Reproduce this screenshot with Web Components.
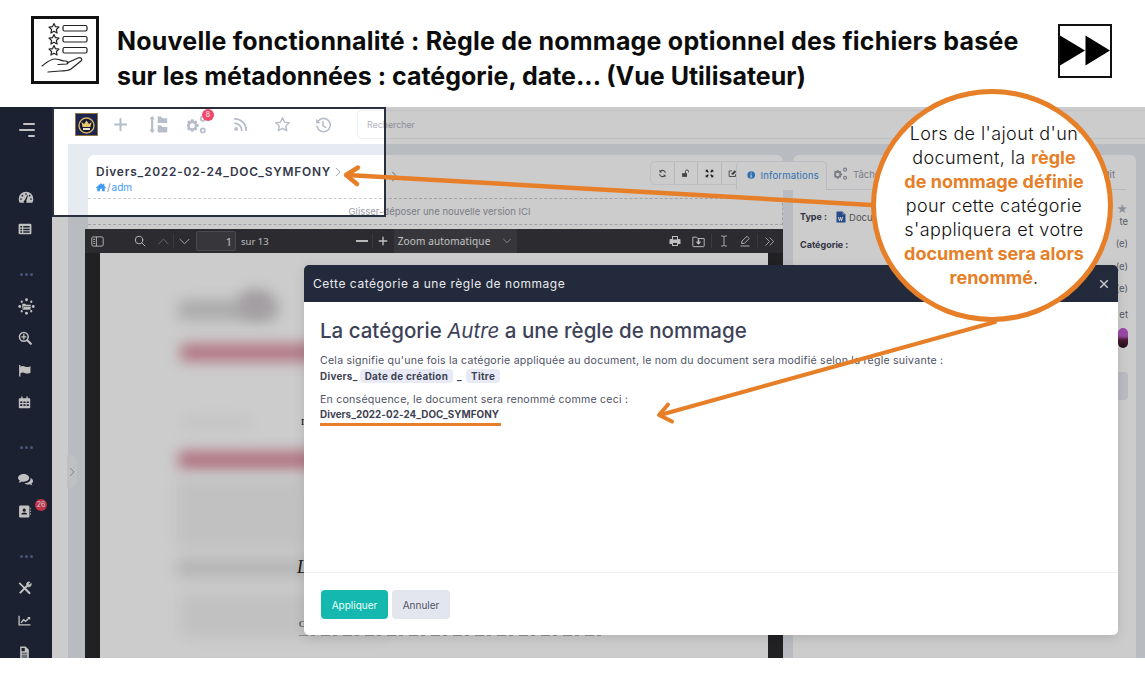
<!DOCTYPE html>
<html lang="fr">
<head>
<meta charset="utf-8">
<title>Règle de nommage</title>
<style>
  html, body { margin: 0; padding: 0; background: #fff; overflow: hidden; }
  demo-slide { font-family: Inter, "Liberation Sans", sans-serif; }
</style>
</head>
<body>
<demo-slide>
  <slide-header></slide-header>
  <app-shell></app-shell>
  <dim-layer></dim-layer>
  <focus-frame></focus-frame>
  <rule-modal></rule-modal>
  <arrow-overlay></arrow-overlay>
  <call-out>
    Lors de l'ajout d'un<br>document, la <b>règle</b><br><b>de nommage définie</b><br>pour cette catégorie<br>s'appliquera et votre<br><b>document sera alors</b><br><b>renommé</b>.
  </call-out>
</demo-slide>

<script>
// small inline icons, viewBox 24 unless said otherwise
const icons = {
    gauge: `<path fill="currentColor" d="M12 4A11 11 0 0 0 1 15c0 2.1.6 3.900 1.600 5.500h18.800A10.800 10.800 0 0 0 23 15 11 11 0 0 0 12 4z"/><g fill="#222a3c"><circle cx="12" cy="7.500" r="1.300"/><circle cx="6.500" cy="10" r="1.300"/><circle cx="4.500" cy="15" r="1.300"/><circle cx="19.500" cy="15" r="1.300"/><circle cx="17.500" cy="10" r="1.300"/><path d="M10 17l4-7.500 1 .5-2.600 7.500a2.200 2.200 0 1 1-2.400-.5z"/></g>`,
    list: `<path fill="currentColor" fill-rule="evenodd" d="M3 3h18a2 2 0 0 1 2 2v14a2 2 0 0 1-2 2H3a2 2 0 0 1-2-2V5a2 2 0 0 1 2-2zm1 4v2.500h3V7zm5 0v2.500h11V7zm-5 4.500V14h3v-2.500zm5 0V14h11v-2.500zM4 16v2.500h3V16zm5 0v2.500h11V16z"/>`,
    ringFolder: `<g fill="currentColor"><circle cx="12" cy="2.500" r="2"/><circle cx="12" cy="21.500" r="2"/><circle cx="2.500" cy="12" r="2"/><circle cx="21.500" cy="12" r="2"/><circle cx="5.300" cy="5.300" r="1.600"/><circle cx="18.700" cy="5.300" r="1.600"/><circle cx="5.300" cy="18.700" r="1.600"/><circle cx="18.700" cy="18.700" r="1.600"/><path d="M6 8h4l1.500 1.500H18V17H6z"/></g><path d="M6 17l2-5h11l-2 5z" fill="currentColor" stroke="#222a3c" stroke-width=".8"/>`,
    searchPlus: `<g fill="none" stroke="currentColor" stroke-linecap="round"><circle cx="10" cy="10" r="7.500" stroke-width="2.600"/><path stroke-width="3.600" d="M16 16l6 6"/><path stroke-width="2.400" d="M10 6.500v7M6.500 10h7"/></g>`,
    flag: `<path fill="currentColor" d="M2 2h2.500v3C8 3 11 4 13.500 5S19 6 23 4v12c-4 2-7 2-9.500 1S8 15 4.500 17v6H2z"/>`,
    calendar: `<path fill="currentColor" fill-rule="evenodd" d="M6 1h2.500v3h7V1H18v3h3a1.500 1.500 0 0 1 1.500 1.500V21a1.500 1.500 0 0 1-1.500 1.500H3A1.500 1.500 0 0 1 1.500 21V5.500A1.500 1.500 0 0 1 3 4h3zM4 10v3h4v-3zm6 0v3h4v-3zm6 0v3h4v-3zM4 15v3.500h4V15zm6 0v3.500h4V15zm6 0v3.500h4V15z"/>`,
    comments: `<g fill="currentColor"><path d="M9 3c5 0 9 2.800 9 6.300s-4 6.200-9 6.200c-1.200 0-2.200-.1-3.200-.4C4.500 16.300 2.700 17 1 17c1-1 1.700-2.200 1.900-3.300C1.100 12.500 0 11 0 9.300 0 5.800 4 3 9 3z"/><path d="M20 9.500c2.400 1 4 2.800 4 4.900 0 1.600-.9 3-2.500 4 .2 1 .8 2 1.700 2.800-1.600 0-3-.5-4.200-1.500-.9.200-1.800.3-2.800.3-2.500 0-4.700-.8-6-2.100 6 0 11-3.600 9.800-8.400z"/></g>`,
    contact: `<path fill="currentColor" fill-rule="evenodd" d="M4 1h15a2 2 0 0 1 2 2v18a2 2 0 0 1-2 2H4a2 2 0 0 1-2-2V3a2 2 0 0 1 2-2zm7.500 5.500a3 3 0 1 0 0 6 3 3 0 0 0 0-6zM6 17.500h11c0-2.500-2-3.800-5.500-3.800S6 15 6 17.500z"/><path fill="currentColor" d="M22 5h1.500v3H22zm0 5h1.500v3H22zm0 5h1.500v3H22z"/>`,
    tools: `<g stroke="currentColor" fill="none" stroke-linecap="round"><path stroke-width="3.400" d="M4 20l11-11"/><path stroke-width="3.800" d="M11 12l8.500 8.500"/><path stroke-width="3" d="M3 4l7 7"/><path fill="currentColor" stroke-width="1.200" d="M14.500 4.500a4.500 4.500 0 0 1 6-2.500l-3 3 2 2 3-3a4.500 4.500 0 0 1-6.500 5.500z"/></g>`,
    chart: `<g fill="none" stroke="currentColor"><path stroke-width="2.400" d="M2 3v17h21"/><path stroke-width="2.600" d="M5.500 16l5-5.500 3.500 3L21 7"/></g><path fill="currentColor" d="M17 5.500h5.500V11z"/>`,
    file: `<path fill="currentColor" fill-rule="evenodd" d="M4 1h10l6 6v16H4zm2.500 2.500v6h6v-6zM7 12.500V14h10v-1.500zM7 16v1.500h10V16zm0 3.500V21h10v-1.500z"/>`,
    plus: `<path fill="none" stroke="currentColor" stroke-width="3.200" stroke-linecap="round" d="M12 3v18M3 12h18"/>`,
    tree: `<g fill="currentColor"><path d="M4 1l3.500 4.500H5.400v13h2.100L4 23 .5 18.500h2.100v-13H.5z"/><path d="M11 2h4l2 2h6v6H11zM11 13h4l2 2h6v7H11z"/></g>`,
    gears: `<g fill="currentColor"><path fill-rule="evenodd" d="M7.500 5l1 2.200 2.200-.6 1.700 1.700-.8 2.100 2.400 1v2.400l-2.400 1 .8 2.100-1.700 1.700-2.200-.6-1 2.200H5.100l-1-2.200-2.200.6L.2 16.900l.8-2.100-1-1v-2.400l1-1L.2 8.300l1.700-1.700 2.200.6 1-2.200zm-1.200 5a3 3 0 1 0 0 6 3 3 0 0 0 0-6z"/><path fill-rule="evenodd" d="M19 1a3.500 3.500 0 1 1 0 7 3.500 3.500 0 0 1 0-7zm0 2a1.500 1.500 0 1 0 0 3 1.500 1.500 0 0 0 0-3zM19 15a3.500 3.500 0 1 1 0 7 3.500 3.500 0 0 1 0-7zm0 2a1.500 1.500 0 1 0 0 3 1.500 1.500 0 0 0 0-3z"/></g>`,
    rss: `<g fill="none" stroke="currentColor" stroke-width="2.800" stroke-linecap="round"><path d="M3 3c10 0 18 8 18 18M3 10c6 0 11 5 11 11"/></g><circle cx="5" cy="19" r="3" fill="currentColor"/>`,
    star: `<path fill="none" stroke="currentColor" stroke-width="2" stroke-linejoin="round" d="M12 2.500l2.900 6.200 6.700.8-5 4.600 1.400 6.700-6-3.400-6 3.400 1.400-6.700-5-4.600 6.700-.8z"/>`,
    history: `<g fill="none" stroke="currentColor" stroke-width="2.400" stroke-linecap="round"><path d="M4.500 6.500A10 10 0 1 1 3 14"/><path d="M12 7v6l4 2.500"/></g><path fill="currentColor" d="M1.500 2.500l7 7h-7z"/>`,
    home: `<path fill="currentColor" d="M12 3L0 13l1.500 1.800L3 13.600V22h6.500v-6h5v6H21v-8.400l1.500 1.200L24 13l-4-3.300V4h-3v3.200z"/>`,
    chevron: `<path fill="none" stroke="currentColor" stroke-width="2.200" stroke-linecap="round" stroke-linejoin="round" d="M8 3l9 9-9 9"/>`,
    sync: `<g fill="none" stroke="currentColor" stroke-width="3"><path d="M20 10a8 8 0 0 0-14-3.500M4 14a8 8 0 0 0 14 3.500"/></g><path fill="currentColor" d="M4 2v7h7zM20 22v-7h-7z"/>`,
    unlock: `<path fill="currentColor" d="M3 11h13v10H3z"/><path fill="none" stroke="currentColor" stroke-width="2.500" d="M12 11V6.500a4 4 0 0 1 8 0V9"/>`,
    expand: `<g fill="currentColor"><path d="M2 2h7L6.800 4.200l3.500 3.500-2.600 2.600-3.500-3.500L2 9zM22 2v7l-2.200-2.200-3.500 3.500-2.600-2.600 3.500-3.500L15 2zM2 22v-7l2.200 2.200 3.500-3.500 2.600 2.600-3.500 3.500L9 22zM22 22h-7l2.200-2.200-3.500-3.500 2.600-2.600 3.500 3.500L22 15z"/></g>`,
    edit: `<path fill="none" stroke="currentColor" stroke-width="2.400" d="M20 14v6H3V5h8"/><path fill="currentColor" d="M10 11l8-8 4 4-8 8H10z"/>`,
    info: `<circle cx="12" cy="12" r="11" fill="currentColor"/><path fill="#fff" d="M10.500 5h3v3h-3zM10 10.500h3.500V17H15v2H9v-2h1.500v-4.500H10z"/>`,
    panel: `<g fill="none" stroke="currentColor" stroke-width="1.600"><rect x="1.500" y="3.500" width="21" height="17" rx="2.500"/><path d="M10 3.500v17"/></g><path fill="currentColor" d="M4 7h3.500v1.600H4zm0 4h3.500v1.600H4zm0 4h3.500v1.600H4z"/>`,
    search: `<g fill="none" stroke="currentColor" stroke-width="1.800" stroke-linecap="round"><circle cx="10" cy="10" r="7.500"/><path d="M15.500 15.500l6.500 6.500"/></g>`,
    up: `<path fill="none" stroke="currentColor" stroke-width="1.800" stroke-linecap="round" stroke-linejoin="round" d="M2 17l10-10 10 10"/>`,
    down: `<path fill="none" stroke="currentColor" stroke-width="1.800" stroke-linecap="round" stroke-linejoin="round" d="M2 7l10 10L22 7"/>`,
    print: `<path fill="currentColor" fill-rule="evenodd" d="M6 2h12v6h3a2 2 0 0 1 2 2v8h-5v4H6v-4H1v-8a2 2 0 0 1 2-2h3zm2 2v5h8V4zm0 12v4h8v-4z"/>`,
    save: `<g fill="none" stroke="currentColor" stroke-width="1.700"><path d="M1.500 4h7l2 2.500h12V20a1.500 1.500 0 0 1-1.500 1.500H3A1.500 1.500 0 0 1 1.500 20z"/></g><path fill="currentColor" d="M10.500 8h3v4.500H17L12 18l-5-5.500h3.500z"/>`,
    cursor: `<path fill="none" stroke="currentColor" stroke-width="1.700" stroke-linecap="round" d="M7 2h3.500L12 3.500 13.500 2H17M12 3.500v17M7 22h3.500l1.500-1.500 1.500 1.500H17"/>`,
    pen: `<path fill="none" stroke="currentColor" stroke-width="1.700" stroke-linejoin="round" d="M5 17l1-5L16 2.500l4.500 4.500L11 16.500zM3 22h18"/>`,
    more: `<path fill="none" stroke="currentColor" stroke-width="1.700" stroke-linecap="round" stroke-linejoin="round" d="M4 4l8 8-8 8M13 4l8 8-8 8"/>`,
    word: `<path fill="#2f5fa8" d="M3 1h12l6 6v16H3z"/><path fill="#9db7dd" d="M15 1l6 6h-6z"/><path fill="#fff" d="M6 12h2l1 5 1.300-5h1.400l1.300 5 1-5h2l-2 8h-1.800L11 15.500 9.800 20H8z"/>`
};

const svg = (name, size, style = "") => `<svg viewBox="0 0 24 24" width="${size}" height="${size}" style="${style}" aria-hidden="true">${icons[name]}</svg>`;

class DemoSlide extends HTMLElement {
    constructor() {
        super();
        this.attachShadow({ mode: "open" });
    }
    connectedCallback() {
        this.shadowRoot.innerHTML = `
            <style>
                :host { display: block; position: relative; width: 1145px; height: 693px; overflow: hidden; background: #fff; }
            </style>
            <slot></slot>
        `;
    }
}

class SlideHeader extends HTMLElement {
    constructor() {
        super();
        this.attachShadow({ mode: "open" });
    }
    connectedCallback() {
        this.shadowRoot.innerHTML = `
            <style>
                :host { display: flex; align-items: flex-start; height: 107px; box-sizing: border-box; padding: 16px 33px 0 31px; background: #fff; }
                .badge { width: 68px; height: 68px; flex: none; box-sizing: border-box; border: 3px solid #111; }
                .badge svg { display: block; }
                h1 { flex: 1; margin: 8px 0 0 18px; font: 700 25px/34.500px Inter, "Liberation Sans", sans-serif; letter-spacing: .21px; color: #0c0c0c; white-space: nowrap; }
                h1 span { letter-spacing: 0; }
                .next { width: 54px; height: 54px; flex: none; margin-top: 8px; box-sizing: border-box; border: 2px solid #111; display: block; }
            </style>
            <div class="badge">
                <svg viewBox="0 0 62 62" width="62" height="62">
                    <g fill="none" stroke="#222" stroke-width="1.200" stroke-linejoin="round">
                        <path id="s" d="M20 4.500l1.500 3.200 3.500.4-2.600 2.400.7 3.500-3.100-1.800-3.100 1.800.7-3.500L15 8.100l3.500-.4z"/>
                        <path d="M20 15.500l1.500 3.200 3.500.4-2.600 2.400.7 3.500-3.100-1.800-3.100 1.800.7-3.500L15 19.100l3.500-.4z"/>
                        <path d="M20 26.500l1.500 3.200 3.500.4-2.600 2.400.7 3.500-3.100-1.800-3.100 1.800.7-3.500L15 30.100l3.500-.4z"/>
                        <rect x="29" y="6.500" width="24" height="5.500" rx="1.500"/>
                        <rect x="29" y="17.500" width="24" height="5.500" rx="1.500"/>
                        <rect x="29" y="28.500" width="24" height="5.500" rx="1.500"/>
                        <path stroke-linecap="round" d="M8 47c4-3 8-7 13-7 4 0 7 2 10 2 3 0 4 2 2 3l-9 .5M33 44l11-5c3-1 5 1 3 3l-10 8c-3 2-7 2-11 2l-12 1"/>
                    </g>
                </svg>
            </div>
            <h1>Nouvelle fonctionnalité : Règle de nommage optionnel des fichiers basée<br><span>sur les métadonnées : catégorie, date... (Vue Utilisateur)</span></h1>
            <svg class="next" viewBox="0 0 50 50">
                <path fill="#000" d="M0 9.500l25 15-25 15zM25.500 9.500l24.500 15-24.500 15z"/>
            </svg>
        `;
    }
}

class AppSidebar extends HTMLElement {
    constructor() {
        super();
        this.attachShadow({ mode: "open" });
    }
    row(name, size, extra = "") {
        return `<div class="row">${svg(name, size)}${extra}</div>`;
    }
    connectedCallback() {
        const dots = `<div class="dots"><i></i><i></i><i></i></div>`;
        this.shadowRoot.innerHTML = `
            <style>
                :host { display: flex; flex-direction: column; width: 52px; flex: none; background: #222a3c; color: #f2f2f2; overflow: hidden; }
                .menu { height: 14px; margin: 16px 0 44px 19px; width: 16px; display: flex; flex-direction: column; gap: 4px; align-items: flex-end; }
                .menu i { display: block; height: 2px; background: #f2f2f2; border-radius: 1px; }
                .row { height: 32px; flex: none; display: flex; align-items: center; padding-left: 18px; position: relative; }
                .dots { height: 32px; flex: none; margin-top: 13px; display: flex; align-items: center; justify-content: center; gap: 2px; }
                .dots i { width: 3px; height: 3px; border-radius: 50%; background: #5c6a96; }
                .count { position: absolute; left: 35px; top: 4px; width: 12px; height: 12px; border-radius: 50%; background: #f0405f; color: #fff; font: 7px/12px Inter, sans-serif; text-align: center; }
            </style>
            <div class="menu"><i style="width:12px"></i><i style="width:16px"></i><i style="width:7px"></i></div>
            ${this.row("gauge", 16)}
            ${this.row("list", 14)}
            ${dots}
            ${this.row("ringFolder", 17)}
            ${this.row("searchPlus", 14)}
            ${this.row("flag", 13)}
            ${this.row("calendar", 13)}
            ${dots}
            ${this.row("comments", 15)}
            ${this.row("contact", 13, `<span class="count">26</span>`)}
            ${dots}
            ${this.row("tools", 14)}
            ${this.row("chart", 13)}
            ${this.row("file", 13)}
        `;
    }
}

class AppTopbar extends HTMLElement {
    constructor() {
        super();
        this.attachShadow({ mode: "open" });
    }
    connectedCallback() {
        this.shadowRoot.innerHTML = `
            <style>
                :host { display: flex; align-items: center; height: 37px; flex: none; background: #fff; color: #b7becb; padding-left: 23px; box-sizing: border-box; }
                .logo { width: 23px; height: 23px; flex: none; display: block; margin-top: -3px; }
                span.ic { display: flex; flex: none; width: 22px; justify-content: center; position: relative; margin-top: -2px; }
                .num { position: absolute; left: 16px; top: -6px; width: 12px; height: 12px; border-radius: 50%; background: #f4486a; color: #fff; font: 7px/12px Inter, sans-serif; text-align: center; }
                input { flex: 1; min-width: 0; height: 29px; box-sizing: border-box; margin: -3px 0 0 23px; padding: 0 9px; border: 1px solid #eef0f4; border-right: 0; border-radius: 5px 0 0 5px; font: 8.800px Inter, sans-serif; background: #fff; }
                input::placeholder { color: #b1b5bf; }
            </style>
            <svg class="logo" viewBox="0 0 23 23">
                <rect width="23" height="23" fill="#1d2450"/>
                <rect x=".5" y=".5" width="22" height="22" fill="none" stroke="#8f7440"/>
                <circle cx="11.500" cy="12.500" r="7.500" fill="#15183a" stroke="#d4b25a" stroke-width="1.400"/>
                <path fill="#e3c66c" d="M6.500 9l2.500 2 2.500-3.500L14 11l2.500-2-1 5h-8z"/>
                <path fill="#e8e4d2" d="M8 15h7v2H8z"/>
            </svg>
            <span class="ic" style="margin-left:11px">${svg("plus", 15)}</span>
            <span class="ic" style="margin-left:16px">${svg("tree", 19)}</span>
            <span class="ic" style="margin-left:17px">${svg("gears", 20)}<b class="num" style="font-weight:400">8</b></span>
            <span class="ic" style="margin-left:21px">${svg("rss", 15)}</span>
            <span class="ic" style="margin-left:20px">${svg("star", 17)}</span>
            <span class="ic" style="margin-left:19px">${svg("history", 16)}</span>
            <input placeholder="Rechercher">
        `;
    }
}

class DocCard extends HTMLElement {
    constructor() {
        super();
        this.attachShadow({ mode: "open" });
    }
    connectedCallback() {
        this.shadowRoot.innerHTML = `
            <style>
                :host { display: block; height: 74px; flex: none; box-sizing: border-box; margin-left: 3px; background: #fff; border-radius: 6px 6px 0 0; position: relative; color: #3f4254; }
                .head { display: flex; height: 43px; box-sizing: border-box; padding: 10px 0 0 8px; }
                .title { font: 600 11.900px/14px Inter, sans-serif; letter-spacing: .8px; white-space: nowrap; display: flex; align-items: center; color: #34384a; }
                .title svg { color: #9a9da8; margin-left: 2px; }
                .far { color: #9a9da8; margin: 1px 0 0 46px; }
                .path { display: flex; align-items: center; gap: 1px; font: 10px/12px Inter, sans-serif; color: #3d9bf5; margin-top: 2px; }
                .path em { font-style: normal; color: #8b8f9c; }
                .tools { margin: -4px 38px 0 auto; height: 22px; display: flex; border: 1px solid #eff0f4; border-radius: 5px; color: #555; }
                .tools span { width: 22.500px; display: flex; align-items: center; justify-content: center; border-left: 1px solid #e6e7ec; }
                .tools span:first-child { border-left: 0; }
                .drop { height: 27px; box-sizing: border-box; padding-left: 9px; border: 1px dashed #c9ccd3; border-width: 1px 1px 1px 0; text-align: center; font: 9.500px/26px Inter, sans-serif; color: #9a9da8; }
            </style>
            <div class="head">
                <div>
                    <div class="title">Divers_2022-02-24_DOC_SYMFONY ${svg("chevron", 10)}</div>
                    <div class="path">${svg("home", 10)}<em>/</em>adm</div>
                </div>
                <div class="far">${svg("chevron", 11)}</div>
                <div class="tools">
                    <span>${svg("sync", 9)}</span><span>${svg("unlock", 9)}</span><span style="color:#222">${svg("expand", 9)}</span><span>${svg("edit", 9)}</span>
                </div>
            </div>
            <div class="drop">Glisser-déposer une nouvelle version ICI</div>
        `;
    }
}

class PdfViewer extends HTMLElement {
    constructor() {
        super();
        this.attachShadow({ mode: "open" });
    }
    connectedCallback() {
        this.shadowRoot.innerHTML = `
            <style>
                :host { display: flex; flex-direction: column; flex: 1; min-height: 0; background: #2a2a2e; font-family: "Noto Sans", sans-serif; }
                .bar { height: 24px; flex: none; display: flex; align-items: center; background: #38383d; color: #f1f1f2; font-size: 10px; }
                .bar svg { flex: none; display: block; }
                .page-no { width: 40px; height: 20px; box-sizing: border-box; margin-left: 6px; border: 1px solid #5c5c61; border-radius: 2px; background: #45454a; text-align: right; padding-right: 3px; line-height: 19px; font-size: 11px; }
                .of { margin-left: 5px; color: #e6e6e8; font-size: 9.500px; }
                .sep { width: 1px; height: 14px; background: #4a4a4f; flex: none; }
                .zoom { margin-left: 6px; width: 123px; height: 24px; box-sizing: border-box; padding: 0 6px 0 4px; background: #45454a; display: flex; align-items: center; justify-content: space-between; letter-spacing: .15px; }
                .view { flex: 1; min-height: 0; padding: 0 15px; }
                .sheet { height: 100%; background: #fff; position: relative; overflow: hidden; }
                .blob { position: absolute; filter: blur(7px); border-radius: 6px; }
                .frag { position: absolute; font: 13px "Liberation Serif", serif; color: #222; }
                .torn { position: absolute; left: 199px; top: 382px; width: 305px; height: 1px; opacity: .55; background: repeating-linear-gradient(90deg, #777 0 9px, transparent 9px 12px, #777 12px 16px, transparent 16px 22px); }
            </style>
            <div class="bar">
                ${svg("panel", 13, "margin-left:6px")}
                ${svg("search", 12, "margin-left:30px")}
                ${svg("up", 11, "margin-left:12px;opacity:.5")}
                <span class="sep" style="margin-left:4px"></span>
                ${svg("down", 11, "margin-left:5px")}
                <span class="page-no">1</span><span class="of">sur 13</span>
                <span style="width:87px;flex:none"></span>
                <span style="width:12px;height:1.500px;background:#e6e6e8;flex:none"></span>
                <span class="sep" style="margin-left:4px"></span>
                ${svg("plus", 10, "margin-left:5px")}
                <div class="zoom"><span>Zoom automatique</span>${svg("down", 8)}</div>
                ${svg("print", 12, "margin-left:152px")}
                ${svg("save", 13, "margin-left:11px")}
                <span class="sep" style="margin-left:6px"></span>
                ${svg("cursor", 12, "margin-left:6px")}
                ${svg("pen", 12, "margin-left:9px")}
                <span class="sep" style="margin-left:6px"></span>
                ${svg("more", 11, "margin-left:6px")}
            </div>
            <div class="view">
                <div class="sheet">
                    <div class="blob" style="left:78px;top:47px;width:100px;height:20px;background:#d6d6d6"></div>
                    <div class="blob" style="left:138px;top:36px;width:36px;height:30px;border-radius:50%;background:#cbc5c9"></div>
                    <div class="blob" style="left:80px;top:91px;width:220px;height:17px;background:#dd8fa2"></div>
                    <div class="blob" style="left:82px;top:165px;width:70px;height:8px;background:#f0f0f0"></div>
                    <div class="blob" style="left:78px;top:198px;width:220px;height:18px;background:#dd8fa2"></div>
                    <div class="blob" style="left:76px;top:225px;width:130px;height:70px;background:#f2f2f2"></div>
                    <div class="blob" style="left:76px;top:305px;width:200px;height:20px;background:#e4e4e4"></div>
                    <div class="blob" style="left:80px;top:340px;width:210px;height:45px;background:#f2f2f2"></div>
                    <span class="frag" style="left:201px;top:160px">r</span>
                    <span class="frag" style="left:197px;top:304px;font-style:italic;font-size:18px">L</span>
                    <span class="frag" style="left:199px;top:366px;font-size:9px">C</span>
                    <div class="torn"></div>
                </div>
            </div>
        `;
    }
}

class InfoPanel extends HTMLElement {
    constructor() {
        super();
        this.attachShadow({ mode: "open" });
    }
    connectedCallback() {
        this.shadowRoot.innerHTML = `
            <style>
                :host { display: flex; flex-direction: column; width: 343px; flex: none; margin: 0 8px 0 10px; background: #fff; border-radius: 6px 6px 0 0; font-family: Inter, sans-serif; color: #3f4254; box-sizing: border-box; padding-top: 6px; position: relative; z-index: 1; }
                .tabs { display: flex; align-items: stretch; height: 29px; flex: none; margin: 0 10px 0 -57px; font-size: 9.500px; color: #8f93a3; }
                .tab { display: flex; align-items: center; gap: 5px; padding: 0 7px 2px; }
                .on { width: 91px; box-sizing: border-box; padding-left: 10px; background: #fff; border: 1px solid #e9ebf2; border-bottom: 0; border-radius: 5px 5px 0 0; color: #3a8ede; letter-spacing: .2px; }
                .rest { flex: 1; display: flex; justify-content: space-between; border-bottom: 1px solid #e6e8f0; align-items: center; padding-right: 4px; }
                .rest .tab { padding-left: 7px; }
                .cols { display: flex; justify-content: space-between; padding: 13px 8px 0 7px; }
                .left b { display: block; font-size: 9px; font-weight: 700; line-height: 14px; }
                .left .type { display: flex; align-items: center; gap: 8px; height: 14px; margin-top: 7px; margin-bottom: 14px; }
                .left .type span { display: flex; align-items: center; gap: 2px; font-size: 9.500px; color: #666; }
                .right { display: flex; flex-direction: column; align-items: flex-end; font-size: 9.500px; color: #6d7080; }
                .right div { height: 22.500px; line-height: 22px; }
                .avatar { width: 10px; height: 20px; border-radius: 5px; margin-top: 2px; background: linear-gradient(#c25bd0 0, #c25bd0 40%, #5c1f3c 60%, #2a1320 100%); }
                .act { width: 60px; height: 28px; margin-top: 24px; border-radius: 4px; background: #e9eaf4; }
            </style>
            <div class="tabs">
                <div class="tab on">${svg("info", 10)} Informations</div>
                <div class="rest">
                    <div class="tab" style="color:#9a9da8">${svg("gears", 14)} Tâches</div>
                    <div class="tab">Audit</div>
                </div>
            </div>
            <div class="cols">
                <div class="left">
                    <div class="type"><b>Type :</b><span>${svg("word", 12)}Document</span></div>
                    <b>Catégorie :</b>
                </div>
                <div class="right">
                    <span style="color:#b0b3bf;line-height:12px;font-size:11px">★</span>
                    <span style="line-height:14px">te</span>
                    <div style="margin-top:4px">(e)</div>
                    <div>(e)</div>
                    <div>(e)</div>
                    <div style="margin-top:3px">et</div>
                    <span class="avatar"></span>
                    <span class="act"></span>
                </div>
            </div>
        `;
    }
}

class AppShell extends HTMLElement {
    constructor() {
        super();
        this.attachShadow({ mode: "open" });
    }
    connectedCallback() {
        this.shadowRoot.innerHTML = `
            <style>
                :host { display: flex; height: 551px; overflow: hidden; background: #fff; position: relative; isolation: isolate; }
                .main { flex: 1; min-width: 0; display: flex; flex-direction: column; }
                .body { flex: 1; min-height: 0; display: flex; margin-left: 16px; padding-top: 11px; background: #e6ebf2; position: relative; }
                .work { width: 698px; margin-left: 17px; flex: none; display: flex; flex-direction: column; }
                .toggle { position: absolute; left: -1px; top: 311px; width: 10px; height: 33px; background: #eef1f5; border-radius: 0 8px 8px 0; display: flex; align-items: center; color: #9b9ea8; }
            </style>
            <app-sidebar></app-sidebar>
            <div class="main">
                <app-topbar></app-topbar>
                <div class="body">
                    <div class="toggle">${svg("chevron", 10)}</div>
                    <div class="work">
                        <doc-card></doc-card>
                        <pdf-viewer></pdf-viewer>
                    </div>
                    <info-panel></info-panel>
                </div>
            </div>
        `;
    }
}

// grey veil over the app, with a hole where the top bar is highlighted
class DimLayer extends HTMLElement {
    constructor() {
        super();
        this.attachShadow({ mode: "open" });
    }
    connectedCallback() {
        this.shadowRoot.innerHTML = `
            <style>
                :host { display: block; position: absolute; left: 0; top: 107px; width: 1145px; height: 551px; background: rgba(0, 0, 0, .2); clip-path: path(evenodd, "M0 0H1145V551H0ZM53 0H386V110H53Z"); }
            </style>
        `;
    }
}

class FocusFrame extends HTMLElement {
    constructor() {
        super();
        this.attachShadow({ mode: "open" });
    }
    connectedCallback() {
        this.shadowRoot.innerHTML = `
            <style>
                :host { display: block; position: absolute; left: 52px; top: 107px; width: 334px; height: 110px; box-sizing: border-box; border: 2px solid #2a2f3e; pointer-events: none; }
            </style>
        `;
    }
}

class RuleModal extends HTMLElement {
    constructor() {
        super();
        this.attachShadow({ mode: "open" });
    }
    connectedCallback() {
        this.shadowRoot.innerHTML = `
            <style>
                :host { display: flex; flex-direction: column; position: absolute; left: 304px; top: 265px; width: 814px; height: 370px; background: #fff; border-radius: 5px; overflow: hidden; font-family: Inter, sans-serif; color: #3f4254; box-shadow: 0 3px 12px rgba(0, 0, 0, .12); }
                header { height: 37px; flex: none; display: flex; align-items: center; justify-content: space-between; padding: 0 9px; background: #232a3b; color: #e8eaee; font-size: 12px; letter-spacing: .55px; }
                header svg { color: #c6c8cf; }
                .body { flex: 1; padding: 17px 16px 0; }
                h2 { margin: 0 0 10px; font-size: 20.500px; line-height: 24px; font-weight: 500; color: #3d4258; }
                h2 i { font-weight: 400; }
                p { margin: 0; font-size: 10.600px; line-height: 15px; letter-spacing: .22px; color: #4f5366; }
                .rule { display: flex; align-items: center; height: 15px; font-size: 9.850px; letter-spacing: .3px; font-weight: 700; color: #3f4254; }
                .chip { background: #e8ebf5; border-radius: 4px; height: 14px; line-height: 14px; padding: 0 5px; margin: 0 4px 0 2px; }
                .result { display: block; width: 181px; margin-top: 0; padding-bottom: 2px; border-bottom: 3px solid #e67f27; font-size: 9.850px; letter-spacing: .05px; line-height: 14px; font-weight: 700; color: #3f4254; white-space: nowrap; }
                footer { height: 63px; flex: none; display: flex; gap: 4px; padding: 17px 17px 0; box-sizing: border-box; border-top: 1px solid #eff2f5; }
                button { height: 29px; border: 0; border-radius: 4px; font: 10px Inter, sans-serif; padding: 0; }
                .ok { width: 67px; background: #14b8ae; color: #eafffb; }
                .no { width: 58px; background: #e4e6ef; color: #4f5366; }
            </style>
            <header>
                <span>Cette catégorie a une règle de nommage</span>
                <svg viewBox="0 0 24 24" width="10" height="10"><path fill="none" stroke="currentColor" stroke-width="3.500" d="M3 3l18 18M21 3L3 21"/></svg>
            </header>
            <div class="body">
                <h2>La catégorie <i>Autre</i> a une règle de nommage</h2>
                <p>Cela signifie qu'une fois la catégorie appliquée au document, le nom du document sera modifié selon la règle suivante :</p>
                <div class="rule">Divers_ <span class="chip">Date de création</span> _ <span class="chip" style="margin-left:4px">Titre</span></div>
                <p style="margin-top:9px">En conséquence, le document sera renommé comme ceci :</p>
                <span class="result">Divers_2022-02-24_DOC_SYMFONY</span>
            </div>
            <footer>
                <button class="ok">Appliquer</button>
                <button class="no">Annuler</button>
            </footer>
        `;
    }
}

class ArrowOverlay extends HTMLElement {
    constructor() {
        super();
        this.attachShadow({ mode: "open" });
    }
    connectedCallback() {
        this.shadowRoot.innerHTML = `
            <style>
                :host { display: block; position: absolute; left: 0; top: 0; width: 1145px; height: 693px; pointer-events: none; }
                svg { display: block; }
            </style>
            <svg width="1145" height="693" fill="none" stroke="#e67f27" stroke-linecap="round" stroke-linejoin="round">
                <path stroke-width="4.500" d="M880 205.500L347 175"/>
                <path stroke-width="4.500" d="M358 167.500L346 175 357 184"/>
                <path stroke-width="4" d="M995 322L660 415"/>
                <path stroke-width="4" d="M668 404.500L659 415 672 421.500"/>
            </svg>
        `;
    }
}

class CallOut extends HTMLElement {
    constructor() {
        super();
        this.attachShadow({ mode: "open" });
    }
    connectedCallback() {
        this.shadowRoot.innerHTML = `
            <style>
                :host { display: flex; align-items: center; justify-content: center; position: absolute; left: 871px; top: 89px; width: 242px; height: 233px; box-sizing: border-box; border: 5px solid #e67f27; border-radius: 50%; background: #fff; color: #111; text-align: center; font: 300 18px/24px Inter, sans-serif; letter-spacing: .4px; }
                ::slotted(b) { color: #e67f27; font-weight: 700; letter-spacing: 0; }
                .txt { white-space: nowrap; margin: 1px 0 0 4px; }
            </style>
            <div class="txt"><slot></slot></div>
        `;
    }
}

customElements.define("demo-slide", DemoSlide);
customElements.define("slide-header", SlideHeader);
customElements.define("app-sidebar", AppSidebar);
customElements.define("app-topbar", AppTopbar);
customElements.define("doc-card", DocCard);
customElements.define("pdf-viewer", PdfViewer);
customElements.define("info-panel", InfoPanel);
customElements.define("app-shell", AppShell);
customElements.define("dim-layer", DimLayer);
customElements.define("focus-frame", FocusFrame);
customElements.define("rule-modal", RuleModal);
customElements.define("arrow-overlay", ArrowOverlay);
customElements.define("call-out", CallOut);
</script>
</body>
</html>
